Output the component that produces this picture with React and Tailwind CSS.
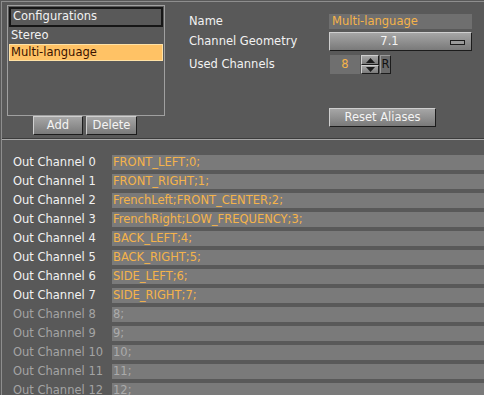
import React from "react";

const font = { fontFamily: '"DejaVu Sans", "Liberation Sans", sans-serif' };

function Btn({ children, className = "" }) {
  return (
    <div
      className={
        "flex items-center justify-center border border-t-[#cfcfcf] border-l-[#cfcfcf] border-b-[#1c1c1c] border-r-[#1c1c1c] bg-gradient-to-b from-[#a6a6a6] to-[#7a7a7a] text-[#f4f4f4] " +
        className
      }
    >
      {children}
    </div>
  );
}

const rows = [
  ["FRONT_LEFT;0;", true],
  ["FRONT_RIGHT;1;", true],
  ["FrenchLeft;FRONT_CENTER;2;", true],
  ["FrenchRight;LOW_FREQUENCY;3;", true],
  ["BACK_LEFT;4;", true],
  ["BACK_RIGHT;5;", true],
  ["SIDE_LEFT;6;", true],
  ["SIDE_RIGHT;7;", true],
  ["8;", false],
  ["9;", false],
  ["10;", false],
  ["11;", false],
  ["12;", false],
];

export default function App() {
  return (
    <div
      className="w-[484px] h-[395px] overflow-hidden bg-[#595959] pt-px pl-px text-[11.5px] leading-none"
      style={font}
    >
      <div className="h-full border-l border-t border-[#8e8e8e]">
        {/* top panel */}
        <div className="flex h-[136px]">
          {/* list */}
          <div className="ml-[5px] mt-[3px] flex w-[158px] flex-col">
            <div className="h-[111px] border border-[#a0a0a0] p-px">
              <div className="flex h-[20px] items-center border-2 border-[#161616] pl-[2px] text-[#f2f2f2]">
                Configurations
              </div>
              <div className="flex h-[17px] items-center pl-[2px] text-[#f2f2f2]">Stereo</div>
              <div className="flex h-[17px] items-center border border-[#ffe2a6] bg-[#ffc265] pl-px text-[#3a1200]">
                Multi-language
              </div>
            </div>
            <div className="mt-0 flex gap-[3px] pl-[26px]">
              <Btn className="h-[19px] w-[50px]">Add</Btn>
              <Btn className="h-[19px] w-[51px]">Delete</Btn>
            </div>
          </div>
          {/* properties */}
          <div className="ml-[24px] flex flex-col">
            <div className="mt-[12px] flex h-[15px] items-center">
              <div className="w-[140px] text-[#f2f2f2]">Name</div>
              <div className="flex h-[15px] w-[143px] items-center bg-[#6f6f6f] pl-[3px] text-[#f5b34a]">
                Multi-language
              </div>
            </div>
            <div className="mt-[3px] flex h-[19px] items-center">
              <div className="w-[140px] text-[#f2f2f2]">Channel Geometry</div>
              <Btn className="relative h-[19px] w-[143px]">
                <span className="mr-[22px]">7.1</span>
                <span className="absolute right-[6px] top-[7px] h-[5px] w-[15px] border border-[#1c1c1c] bg-[#9a9a9a]" />
              </Btn>
            </div>
            <div className="mt-[4px] flex h-[19px] items-center">
              <div className="w-[141px] text-[#f2f2f2]">Used Channels</div>
              <div className="flex h-[19px] w-[30px] items-center justify-center bg-[#6f6f6f] text-[#f5b34a]">8</div>
              <div className="ml-px flex h-[19px] w-[18px] flex-col">
                <Btn className="h-[10px] w-full">
                  <svg width="9" height="5" viewBox="0 0 9 5"><polygon points="0,5 9,5 4.5,0" fill="#1a1a1a" /></svg>
                </Btn>
                <Btn className="h-[9px] w-full">
                  <svg width="9" height="5" viewBox="0 0 9 5"><polygon points="0,0 9,0 4.5,5" fill="#1a1a1a" /></svg>
                </Btn>
              </div>
              <div className="ml-px flex h-[19px] w-[11px] items-center justify-center border border-t-[#9a9a9a] border-l-[#9a9a9a] border-b-[#1c1c1c] border-r-[#1c1c1c] bg-[#6a6a6a] text-[#111]">
                R
              </div>
            </div>
            <div className="mt-[34px] flex">
              <div className="w-[140px]" />
              <Btn className="h-[19px] w-[107px]">Reset Aliases</Btn>
            </div>
          </div>
        </div>
        {/* separator */}
        <div className="h-px bg-[#3c3c3c]" />
        <div className="h-px bg-[#a8a8a8]" />
        {/* channels */}
        <div className="flex flex-col gap-[4px] pt-[15px]">
          {rows.map(([v, on], i) => (
            <div key={i} className="flex h-[15px] items-center">
              <div className={"w-[110px] shrink-0 pl-[11px] " + (on ? "text-[#f2f2f2]" : "text-[#a4a4a4]")}>
                Out Channel {i}
              </div>
              <div
                className={
                  "flex h-[15px] flex-1 items-center bg-[#7a7a7a] pl-[1px] " +
                  (on ? "text-[#f5b34a]" : "text-[#ababab]")
                }
              >
                {v}
              </div>
            </div>
          ))}
        </div>
      </div>
    </div>
  );
}
